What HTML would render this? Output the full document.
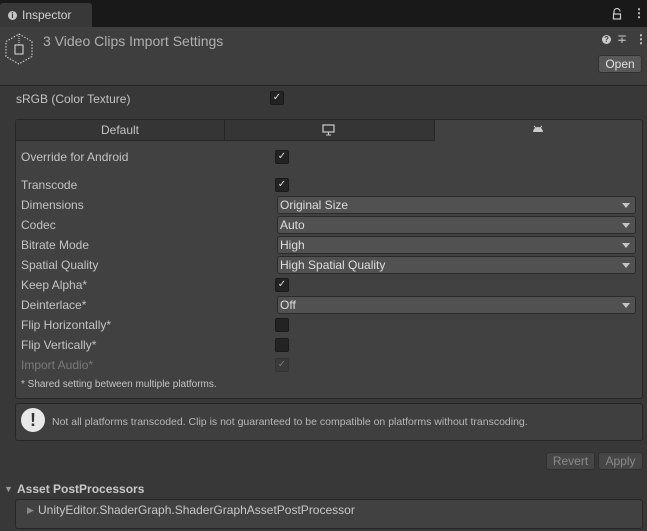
<!DOCTYPE html><html><head><style>
body{margin:0;width:647px;height:531px;background:#383838;font-family:"Liberation Sans",sans-serif;font-size:12px;color:#c4c4c4;position:relative;overflow:hidden}
.a{position:absolute}
.cb{position:absolute;width:12px;height:12px;background:#232323;border:1px solid #1a1a1a;border-radius:2px;color:#ddd;font-size:10px;line-height:12px;text-align:center}
.dd{position:absolute;left:277px;width:355px;height:16px;background:#515151;border:1px solid #2b2b2b;border-radius:3px;color:#dedede;line-height:16px;padding-left:2px;box-sizing:content-box}
.dd:after{content:"";position:absolute;right:5px;top:6px;border-left:4px solid transparent;border-right:4px solid transparent;border-top:5px solid #c4c4c4}
.lb{position:absolute;left:21px}
.btn{position:absolute;background:#464646;border:1px solid #303030;border-radius:3px;color:#8a8a8a;text-align:center;line-height:16px;font-size:12px}
</style></head><body>
<div class="a" style="left:0;top:0;width:647px;height:27px;background:#191919"></div>
<div class="a" style="left:0;top:3px;width:92px;height:24px;background:#383838;border-radius:3px 3px 0 0"></div>
<div class="a" style="left:8px;top:11px;width:9px;height:9px;border-radius:50%;background:#c4c4c4;color:#383838;font-size:8px;line-height:9px;text-align:center;font-weight:bold">i</div>
<div class="a" style="left:22px;top:8px;color:#d0d0d0">Inspector</div>
<svg class="a" style="left:612px;top:8px" width="10" height="12"><path d="M2,6 V3.5 A3,3 0 0 1 8,3.5" fill="none" stroke="#ccc" stroke-width="1.2"/><rect x="1.5" y="6" width="7" height="5" fill="none" stroke="#ccc" stroke-width="1.2"/></svg>
<div class="a" style="left:633px;top:6px;color:#ccc;font-weight:bold">&#8942;</div>
<div class="a" style="left:0;top:27px;width:647px;height:58px;background:#3e3e3e;border-bottom:1px solid #232323"></div>
<svg class="a" style="left:4px;top:33px" width="30" height="32"><polygon points="15,1 28,8.5 28,23.5 15,31 2,23.5 2,8.5" fill="none" stroke="#ddd" stroke-dasharray="1.5,1.5"/><rect x="11" y="12" width="8" height="9" fill="none" stroke="#ddd"/><line x1="15" y1="1" x2="15" y2="12" stroke="#ddd" stroke-dasharray="1,1"/></svg>
<div class="a" style="left:43px;top:33px;color:#b0b0b0;font-size:14px">3 Video Clips Import Settings</div>
<div class="a" style="left:602px;top:35px;width:9px;height:9px;border-radius:50%;background:#ccc;color:#3e3e3e;font-size:8px;line-height:9px;text-align:center;font-weight:bold">?</div>
<div class="a" style="left:617px;top:32px;color:#ccc">&#8723;</div>
<div class="a" style="left:635px;top:32px;color:#ccc;font-weight:bold">&#8942;</div>
<div class="btn" style="left:598px;top:55px;width:42px;height:16px;background:#585858;color:#e0e0e0;line-height:16px">Open</div>
<div class="lb" style="left:16px;top:92px">sRGB (Color Texture)</div>
<div class="cb" style="left:270px;top:91px">&#10003;</div>
<div class="a" style="left:15px;top:119px;width:626px;height:278px;background:#414141;border:1px solid #262626;border-radius:3px"></div>
<div class="a" style="left:16px;top:120px;width:208px;height:20px;background:#353535;border-right:1px solid #262626;border-bottom:1px solid #262626;text-align:center;line-height:20px">Default</div>
<div class="a" style="left:225px;top:120px;width:209px;height:20px;background:#353535;border-right:1px solid #262626;border-bottom:1px solid #262626"></div>
<svg class="a" style="left:322px;top:124px" width="14" height="12"><rect x="1" y="1" width="11" height="7" fill="none" stroke="#ccc" stroke-width="1.2"/><line x1="6.5" y1="8" x2="6.5" y2="11" stroke="#ccc"/><line x1="4" y1="11" x2="9" y2="11" stroke="#ccc"/></svg>
<svg class="a" style="left:532px;top:125px" width="12" height="8"><path d="M1,7 A5,5 0 0 1 11,7 Z" fill="#ccc"/><line x1="2" y1="1" x2="4" y2="3" stroke="#ccc"/><line x1="10" y1="1" x2="8" y2="3" stroke="#ccc"/></svg>
<div class="lb" style="top:150px">Override for Android</div><div class="cb" style="left:275px;top:150px">&#10003;</div>
<div class="lb" style="top:178px">Transcode</div><div class="cb" style="left:275px;top:178px">&#10003;</div>
<div class="lb" style="top:198px">Dimensions</div><div class="dd" style="top:196px">Original Size</div>
<div class="lb" style="top:218px">Codec</div><div class="dd" style="top:216px">Auto</div>
<div class="lb" style="top:238px">Bitrate Mode</div><div class="dd" style="top:236px">High</div>
<div class="lb" style="top:258px">Spatial Quality</div><div class="dd" style="top:256px">High Spatial Quality</div>
<div class="lb" style="top:278px">Keep Alpha*</div><div class="cb" style="left:275px;top:278px">&#10003;</div>
<div class="lb" style="top:298px">Deinterlace*</div><div class="dd" style="top:296px">Off</div>
<div class="lb" style="top:318px">Flip Horizontally*</div><div class="cb" style="left:275px;top:318px"></div>
<div class="lb" style="top:338px">Flip Vertically*</div><div class="cb" style="left:275px;top:338px"></div>
<div class="lb" style="top:358px;color:#7a7a7a">Import Audio*</div><div class="cb" style="left:275px;top:358px;background:#3a3a3a;color:#777;border-color:#333">&#10003;</div>
<div class="lb" style="top:379px;font-size:10px">* Shared setting between multiple platforms.</div>
<div class="a" style="left:15px;top:403px;width:626px;height:36px;background:#3f3f3f;border:1px solid #262626;border-radius:3px"></div>
<div class="a" style="left:21px;top:408px;width:24px;height:24px;border-radius:50%;background:#e8e8e8;color:#333;font-weight:bold;font-size:18px;text-align:center;line-height:24px">!</div>
<div class="a" style="left:52px;top:416px;font-size:10.5px;color:#b8b8b8">Not all platforms transcoded. Clip is not guaranteed to be compatible on platforms without transcoding.</div>
<div class="btn" style="left:546px;top:452px;width:47px;height:16px">Revert</div>
<div class="btn" style="left:598px;top:452px;width:43px;height:16px">Apply</div>
<div class="a" style="left:4px;top:484px;font-size:9px;color:#999">&#9660;</div>
<div class="a" style="left:17px;top:482px;font-weight:bold;color:#c8c8c8">Asset PostProcessors</div>
<div class="a" style="left:15px;top:499px;width:626px;height:28px;background:#414141;border:1px solid #262626;border-radius:3px"></div>
<div class="a" style="left:27px;top:505px;font-size:9px;color:#888">&#9654;</div>
<div class="a" style="left:38px;top:503px;color:#c8c8c8">UnityEditor.ShaderGraph.ShaderGraphAssetPostProcessor</div>
</body></html>
